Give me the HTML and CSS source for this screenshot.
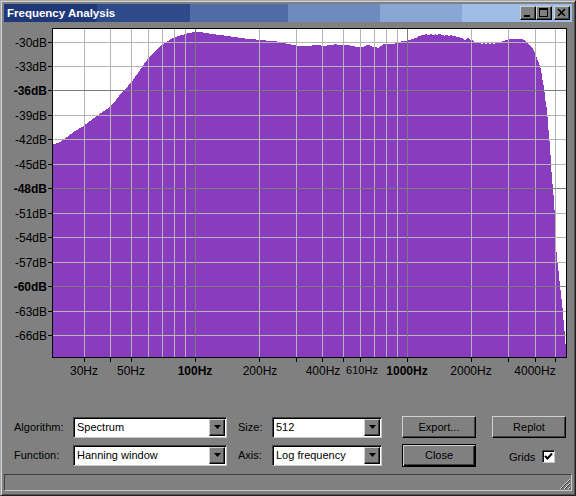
FILE: index.html
```html
<!DOCTYPE html>
<html lang="en">
<head>
    <meta charset="UTF-8">
    <title>Frequency Analysis</title>
    <link rel="stylesheet" href="styles.css">
</head>
<body>
    <div class="window">
        <div class="titlebar">
            <span class="title">Frequency Analysis</span>
            <div class="caption-buttons">
                <div class="cap-btn"><svg width="14" height="12" viewBox="0 0 14 12"><rect x="3" y="8" width="6" height="2"/></svg></div>
                <div class="cap-btn"><svg width="14" height="12" viewBox="0 0 14 12"><rect x="2" y="1" width="9" height="2"/><rect x="2.5" y="1.5" width="8" height="8" fill="none" stroke="#000"/></svg></div>
                <div class="cap-btn close-cap"><svg width="14" height="12" viewBox="0 0 14 12"><path d="M3 2 L10 9 M10 2 L3 9" stroke="#000" stroke-width="1.7"/></svg></div>
            </div>
        </div>

        <!-- spectrum plot, coordinates in page pixels -->
        <svg class="chart" width="568" height="363" viewBox="4 22 568 363">
            <rect class="plot-bg" x="53" y="29" width="513" height="328"/>
            <polygon class="spectrum" points="52,145 60,142 67,137 75,131 82,127 90,121 97,116 104,111 110,107 116,100 123,91 128,86 133,80 138,73 142,67 147,60 152,54 157,49 162,45 167,41.5 173,38 180,35.5 187,33.5 192,32.5 197,32 203,32.5 212,34 220,35 227,36 235,37 241,38 248,39 256,39.5 266,40.5 275,41 282,42.5 288,44 297,45.5 303,46 307,45.5 310,46.5 313,45 317,45.5 320,45 322,46 325,46 328,45 331,45.5 335,44 338,45 341,44.5 344,45.5 347,45 350,45.5 352,46 355,46.5 357,47 360,46.5 362,47.5 365,46 368,44.5 371,46 374,47.5 376,47 378,48 381,46 384,44 388,44 392,44.5 395,43.5 398,42 404,41 409,40 413,39 415,37.5 417,37.5 418,36 421,36 422,34.5 424,35 426,34 428,35 430,35 431,33.5 432,35 434,35 435,34 437,35.5 439,34 440,33 441,34.5 443,35 444,36 446,35 448,35 449,36.5 451,35 453,36 455,35.5 457,37 459,36.5 461,38 463,38 464,40 466,39.5 467,38 469,38 470,40.5 472,39.5 474,42 476,41.5 478,43.5 480,42.5 482,44.5 484,43 486,44.5 488,42.5 490,44 492,43 494,44.5 496,42.5 498,43.5 500,42 502,41.5 504,41 506,40 508,39.5 510,38.5 512,39.5 514,38.5 516,39 518,38.5 520,39.5 522,39 524,40 527,42.5 530,45 533,49 535,53 536.5,57 538,61 539.5,65 541,70 542.5,80 544,87 545.5,101 547,110 548.5,130 550,146 551.3,170 552.7,186 554,200 555.3,226 556.5,252 557.5,262 558.7,273 560,286 561.3,297 562.7,310 564,326 565.3,338 566,357 52,357"/>

            <g class="grid-minor">
                <line x1="84.5" y1="29" x2="84.5" y2="357"/>
                <line x1="110.5" y1="29" x2="110.5" y2="357"/>
                <line x1="131.5" y1="29" x2="131.5" y2="357"/>
                <line x1="148.5" y1="29" x2="148.5" y2="357"/>
                <line x1="162.5" y1="29" x2="162.5" y2="357"/>
                <line x1="174.5" y1="29" x2="174.5" y2="357"/>
                <line x1="185.5" y1="29" x2="185.5" y2="357"/>
                <line x1="259.5" y1="29" x2="259.5" y2="357"/>
                <line x1="296.5" y1="29" x2="296.5" y2="357"/>
                <line x1="322.5" y1="29" x2="322.5" y2="357"/>
                <line x1="343.5" y1="29" x2="343.5" y2="357"/>
                <line x1="360.5" y1="29" x2="360.5" y2="357"/>
                <line x1="374.5" y1="29" x2="374.5" y2="357"/>
                <line x1="386.5" y1="29" x2="386.5" y2="357"/>
                <line x1="397.5" y1="29" x2="397.5" y2="357"/>
                <line x1="471.5" y1="29" x2="471.5" y2="357"/>
                <line x1="508.5" y1="29" x2="508.5" y2="357"/>
                <line x1="535.5" y1="29" x2="535.5" y2="357"/>
                <line x1="555.5" y1="29" x2="555.5" y2="357"/>
                <line x1="53" y1="42.5" x2="566" y2="42.5"/>
                <line x1="53" y1="66.5" x2="566" y2="66.5"/>
                <line x1="53" y1="115.5" x2="566" y2="115.5"/>
                <line x1="53" y1="139.5" x2="566" y2="139.5"/>
                <line x1="53" y1="164.5" x2="566" y2="164.5"/>
                <line x1="53" y1="213.5" x2="566" y2="213.5"/>
                <line x1="53" y1="237.5" x2="566" y2="237.5"/>
                <line x1="53" y1="262.5" x2="566" y2="262.5"/>
                <line x1="53" y1="311.5" x2="566" y2="311.5"/>
                <line x1="53" y1="335.5" x2="566" y2="335.5"/>
            </g>
            <g class="grid-major">
                <line x1="195.5" y1="29" x2="195.5" y2="357"/>
                <line x1="407.5" y1="29" x2="407.5" y2="357"/>
                <line x1="53" y1="90.5" x2="566" y2="90.5"/>
                <line x1="53" y1="188.5" x2="566" y2="188.5"/>
                <line x1="53" y1="286.5" x2="566" y2="286.5"/>
            </g>
            <rect class="plot-frame" x="52.5" y="28.5" width="514" height="329"/>

            <g class="ticks">
                <line x1="48" y1="42.5" x2="52" y2="42.5"/>
                <line x1="48" y1="66.5" x2="52" y2="66.5"/>
                <line x1="48" y1="90.5" x2="52" y2="90.5"/>
                <line x1="48" y1="115.5" x2="52" y2="115.5"/>
                <line x1="48" y1="139.5" x2="52" y2="139.5"/>
                <line x1="48" y1="164.5" x2="52" y2="164.5"/>
                <line x1="48" y1="188.5" x2="52" y2="188.5"/>
                <line x1="48" y1="213.5" x2="52" y2="213.5"/>
                <line x1="48" y1="237.5" x2="52" y2="237.5"/>
                <line x1="48" y1="262.5" x2="52" y2="262.5"/>
                <line x1="48" y1="286.5" x2="52" y2="286.5"/>
                <line x1="48" y1="311.5" x2="52" y2="311.5"/>
                <line x1="48" y1="335.5" x2="52" y2="335.5"/>
                <line x1="84.5" y1="358" x2="84.5" y2="362"/>
                <line x1="110.5" y1="358" x2="110.5" y2="362"/>
                <line x1="131.5" y1="358" x2="131.5" y2="362"/>
                <line x1="195.5" y1="358" x2="195.5" y2="362"/>
                <line x1="259.5" y1="358" x2="259.5" y2="362"/>
                <line x1="296.5" y1="358" x2="296.5" y2="362"/>
                <line x1="322.5" y1="358" x2="322.5" y2="362"/>
                <line x1="343.5" y1="358" x2="343.5" y2="362"/>
                <line x1="360.5" y1="358" x2="360.5" y2="362"/>
                <line x1="407.5" y1="358" x2="407.5" y2="362"/>
                <line x1="471.5" y1="358" x2="471.5" y2="362"/>
                <line x1="508.5" y1="358" x2="508.5" y2="362"/>
                <line x1="535.5" y1="358" x2="535.5" y2="362"/>
                <line x1="555.5" y1="358" x2="555.5" y2="362"/>
            </g>

            <g class="ylabels">
                <text x="47" y="47">-30dB</text>
                <text x="47" y="71">-33dB</text>
                <text x="47" y="95" class="strong">-36dB</text>
                <text x="47" y="120">-39dB</text>
                <text x="47" y="144">-42dB</text>
                <text x="47" y="169">-45dB</text>
                <text x="47" y="193" class="strong">-48dB</text>
                <text x="47" y="218">-51dB</text>
                <text x="47" y="242">-54dB</text>
                <text x="47" y="267">-57dB</text>
                <text x="47" y="291" class="strong">-60dB</text>
                <text x="47" y="316">-63dB</text>
                <text x="47" y="340">-66dB</text>
            </g>
            <g class="xlabels">
                <text x="84" y="375">30Hz</text>
                <text x="131" y="375">50Hz</text>
                <text x="195" y="375" class="strong">100Hz</text>
                <text x="260" y="375">200Hz</text>
                <text x="323" y="375">400Hz</text>
                <text x="362" y="374" class="small">610Hz</text>
                <text x="407" y="375" class="strong">1000Hz</text>
                <text x="471" y="375">2000Hz</text>
                <text x="535" y="375">4000Hz</text>
            </g>
        </svg>

        <div class="controls">
            <span class="label">Algorithm:</span>
            <div class="combo wide">
                <span class="combo-text">Spectrum</span>
                <span class="drop"><svg width="7" height="4" viewBox="0 0 7 4"><path d="M0 0 H7 L3.5 4 Z"/></svg></span>
            </div>
            <span class="label">Size:</span>
            <div class="combo narrow">
                <span class="combo-text">512</span>
                <span class="drop"><svg width="7" height="4" viewBox="0 0 7 4"><path d="M0 0 H7 L3.5 4 Z"/></svg></span>
            </div>
            <button class="btn">Export...</button>
            <button class="btn">Replot</button>

            <span class="label">Function:</span>
            <div class="combo wide">
                <span class="combo-text">Hanning window</span>
                <span class="drop"><svg width="7" height="4" viewBox="0 0 7 4"><path d="M0 0 H7 L3.5 4 Z"/></svg></span>
            </div>
            <span class="label">Axis:</span>
            <div class="combo narrow">
                <span class="combo-text">Log frequency</span>
                <span class="drop"><svg width="7" height="4" viewBox="0 0 7 4"><path d="M0 0 H7 L3.5 4 Z"/></svg></span>
            </div>
            <button class="btn default">Close</button>
            <div class="grids">
                <span>Grids</span>
                <span class="check"><svg width="9" height="9" viewBox="0 0 9 9"><path d="M1 4 L3.5 6.5 L8 1.5" fill="none" stroke="#000" stroke-width="2"/></svg></span>
            </div>
        </div>

        <div class="statusbar">
            <svg class="grip" width="12" height="12" viewBox="0 0 12 12">
                <path d="M11 1 L1 11 M11 5 L5 11 M11 9 L9 11" stroke="#d0d0d0"/>
                <path d="M11 2 L2 11 M11 6 L6 11 M11 10 L10 11" stroke="#404040"/>
            </svg>
        </div>
    </div>
</body>
</html>
```

FILE: styles.css
```css
body {
    margin: 0;
    background: #808080;
    font-family: "Liberation Sans", Arial, sans-serif;
}
.window {
    width: 576px;
    height: 496px;
    box-sizing: border-box;
    background: #808080;
    border: 1px solid;
    border-color: #a8a8a8 #202020 #202020 #a8a8a8;
    box-shadow: inset 1px 1px #d4d4d4, inset -1px -1px #505050;
    padding: 3px 3px 4px;
    display: flex;
    flex-direction: column;
}
.titlebar {
    height: 18px;
    flex: none;
    display: flex;
    align-items: center;
    justify-content: space-between;
    padding: 0 2px;
    background: linear-gradient(to right,
        #1f387a 0 93px, #2d4b8b 93px 186px, #4e6da6 186px 284px,
        #6c8cc0 284px 376px, #87a7d5 376px 458px, #9ebee7 458px);
}
.title {
    color: #fff;
    font-weight: bold;
    font-size: 11.5px;
    padding-left: 1px;
}
.caption-buttons {
    display: flex;
}
.cap-btn {
    width: 16px;
    height: 14px;
    box-sizing: border-box;
    background: #808080;
    border: 1px solid;
    border-color: #d0d0d0 #000 #000 #d0d0d0;
    box-shadow: inset -1px -1px #404040;
}
.cap-btn svg {
    display: block;
}
.close-cap {
    margin-left: 2px;
}
.chart {
    display: block;
    flex: none;
}
.plot-bg {
    fill: #fff;
}
.spectrum {
    fill: #8a3cbe;
    shape-rendering: crispEdges;
}
.grid-minor line {
    stroke: #b4b4b4;
    stroke-width: 1;
}
.grid-major line {
    stroke: #7c7c7c;
    stroke-width: 1;
}
.plot-frame {
    fill: none;
    stroke: #000;
    stroke-width: 1;
}
.ticks line {
    stroke: #000;
    stroke-width: 1;
}
.ylabels text,
.xlabels text {
    font-family: "Liberation Sans", Arial, sans-serif;
    font-size: 12px;
    fill: #000;
}
.ylabels text {
    text-anchor: end;
}
.xlabels text {
    text-anchor: middle;
}
.chart .strong {
    font-weight: bold;
}
.xlabels .small {
    font-size: 11px;
}

/* bottom controls */
.controls {
    flex: none;
    margin-top: 31px;
    padding-left: 9px;
    display: grid;
    grid-template-columns: 60px 164px 35px 130px 90px 74px;
    grid-template-rows: 22px 22px;
    row-gap: 6px;
    align-items: center;
    font-size: 11px;
    color: #000;
}
.label {
    padding-left: 1px;
}
.combo {
    height: 21px;
    box-sizing: border-box;
    background: #fff;
    border: 1px solid;
    border-color: #404040 #c8c8c8 #c8c8c8 #404040;
    box-shadow: inset 1px 1px #000;
    display: flex;
    align-items: center;
    justify-content: space-between;
    padding: 1px 1px 1px 3px;
}
.combo.wide {
    width: 154px;
}
.combo.narrow {
    width: 110px;
}
.combo-text {
    white-space: nowrap;
}
.drop {
    width: 16px;
    height: 17px;
    box-sizing: border-box;
    background: #808080;
    border: 1px solid;
    border-color: #d0d0d0 #000 #000 #d0d0d0;
    box-shadow: inset -1px -1px #404040;
    display: flex;
    align-items: center;
    justify-content: center;
}
.drop svg {
    display: block;
}
.btn {
    width: 74px;
    height: 22px;
    box-sizing: border-box;
    background: #808080;
    border: 1px solid;
    border-color: #d0d0d0 #000 #000 #d0d0d0;
    box-shadow: inset -1px -1px #404040;
    font-family: inherit;
    font-size: 11px;
    color: #000;
    padding: 0;
}
.btn.default {
    height: 23px;
    border-color: #000;
    box-shadow: inset 1px 1px #d0d0d0, inset -1px -1px #000, inset -2px -2px #404040;
}
.grids {
    display: flex;
    align-items: center;
    gap: 7px;
    padding-left: 17px;
    padding-top: 3px;
}
.check {
    width: 13px;
    height: 13px;
    box-sizing: border-box;
    background: #fff;
    border: 1px solid;
    border-color: #404040 #c8c8c8 #c8c8c8 #404040;
    box-shadow: inset 1px 1px #000;
    display: flex;
    align-items: center;
    justify-content: center;
}
.check svg {
    display: block;
}
.statusbar {
    flex: none;
    margin-top: 8px;
    height: 17px;
    box-sizing: border-box;
    border: 1px solid;
    border-color: #404040 #c8c8c8 #c8c8c8 #404040;
    display: flex;
    justify-content: flex-end;
    align-items: flex-end;
}
.grip {
    display: block;
}
```
